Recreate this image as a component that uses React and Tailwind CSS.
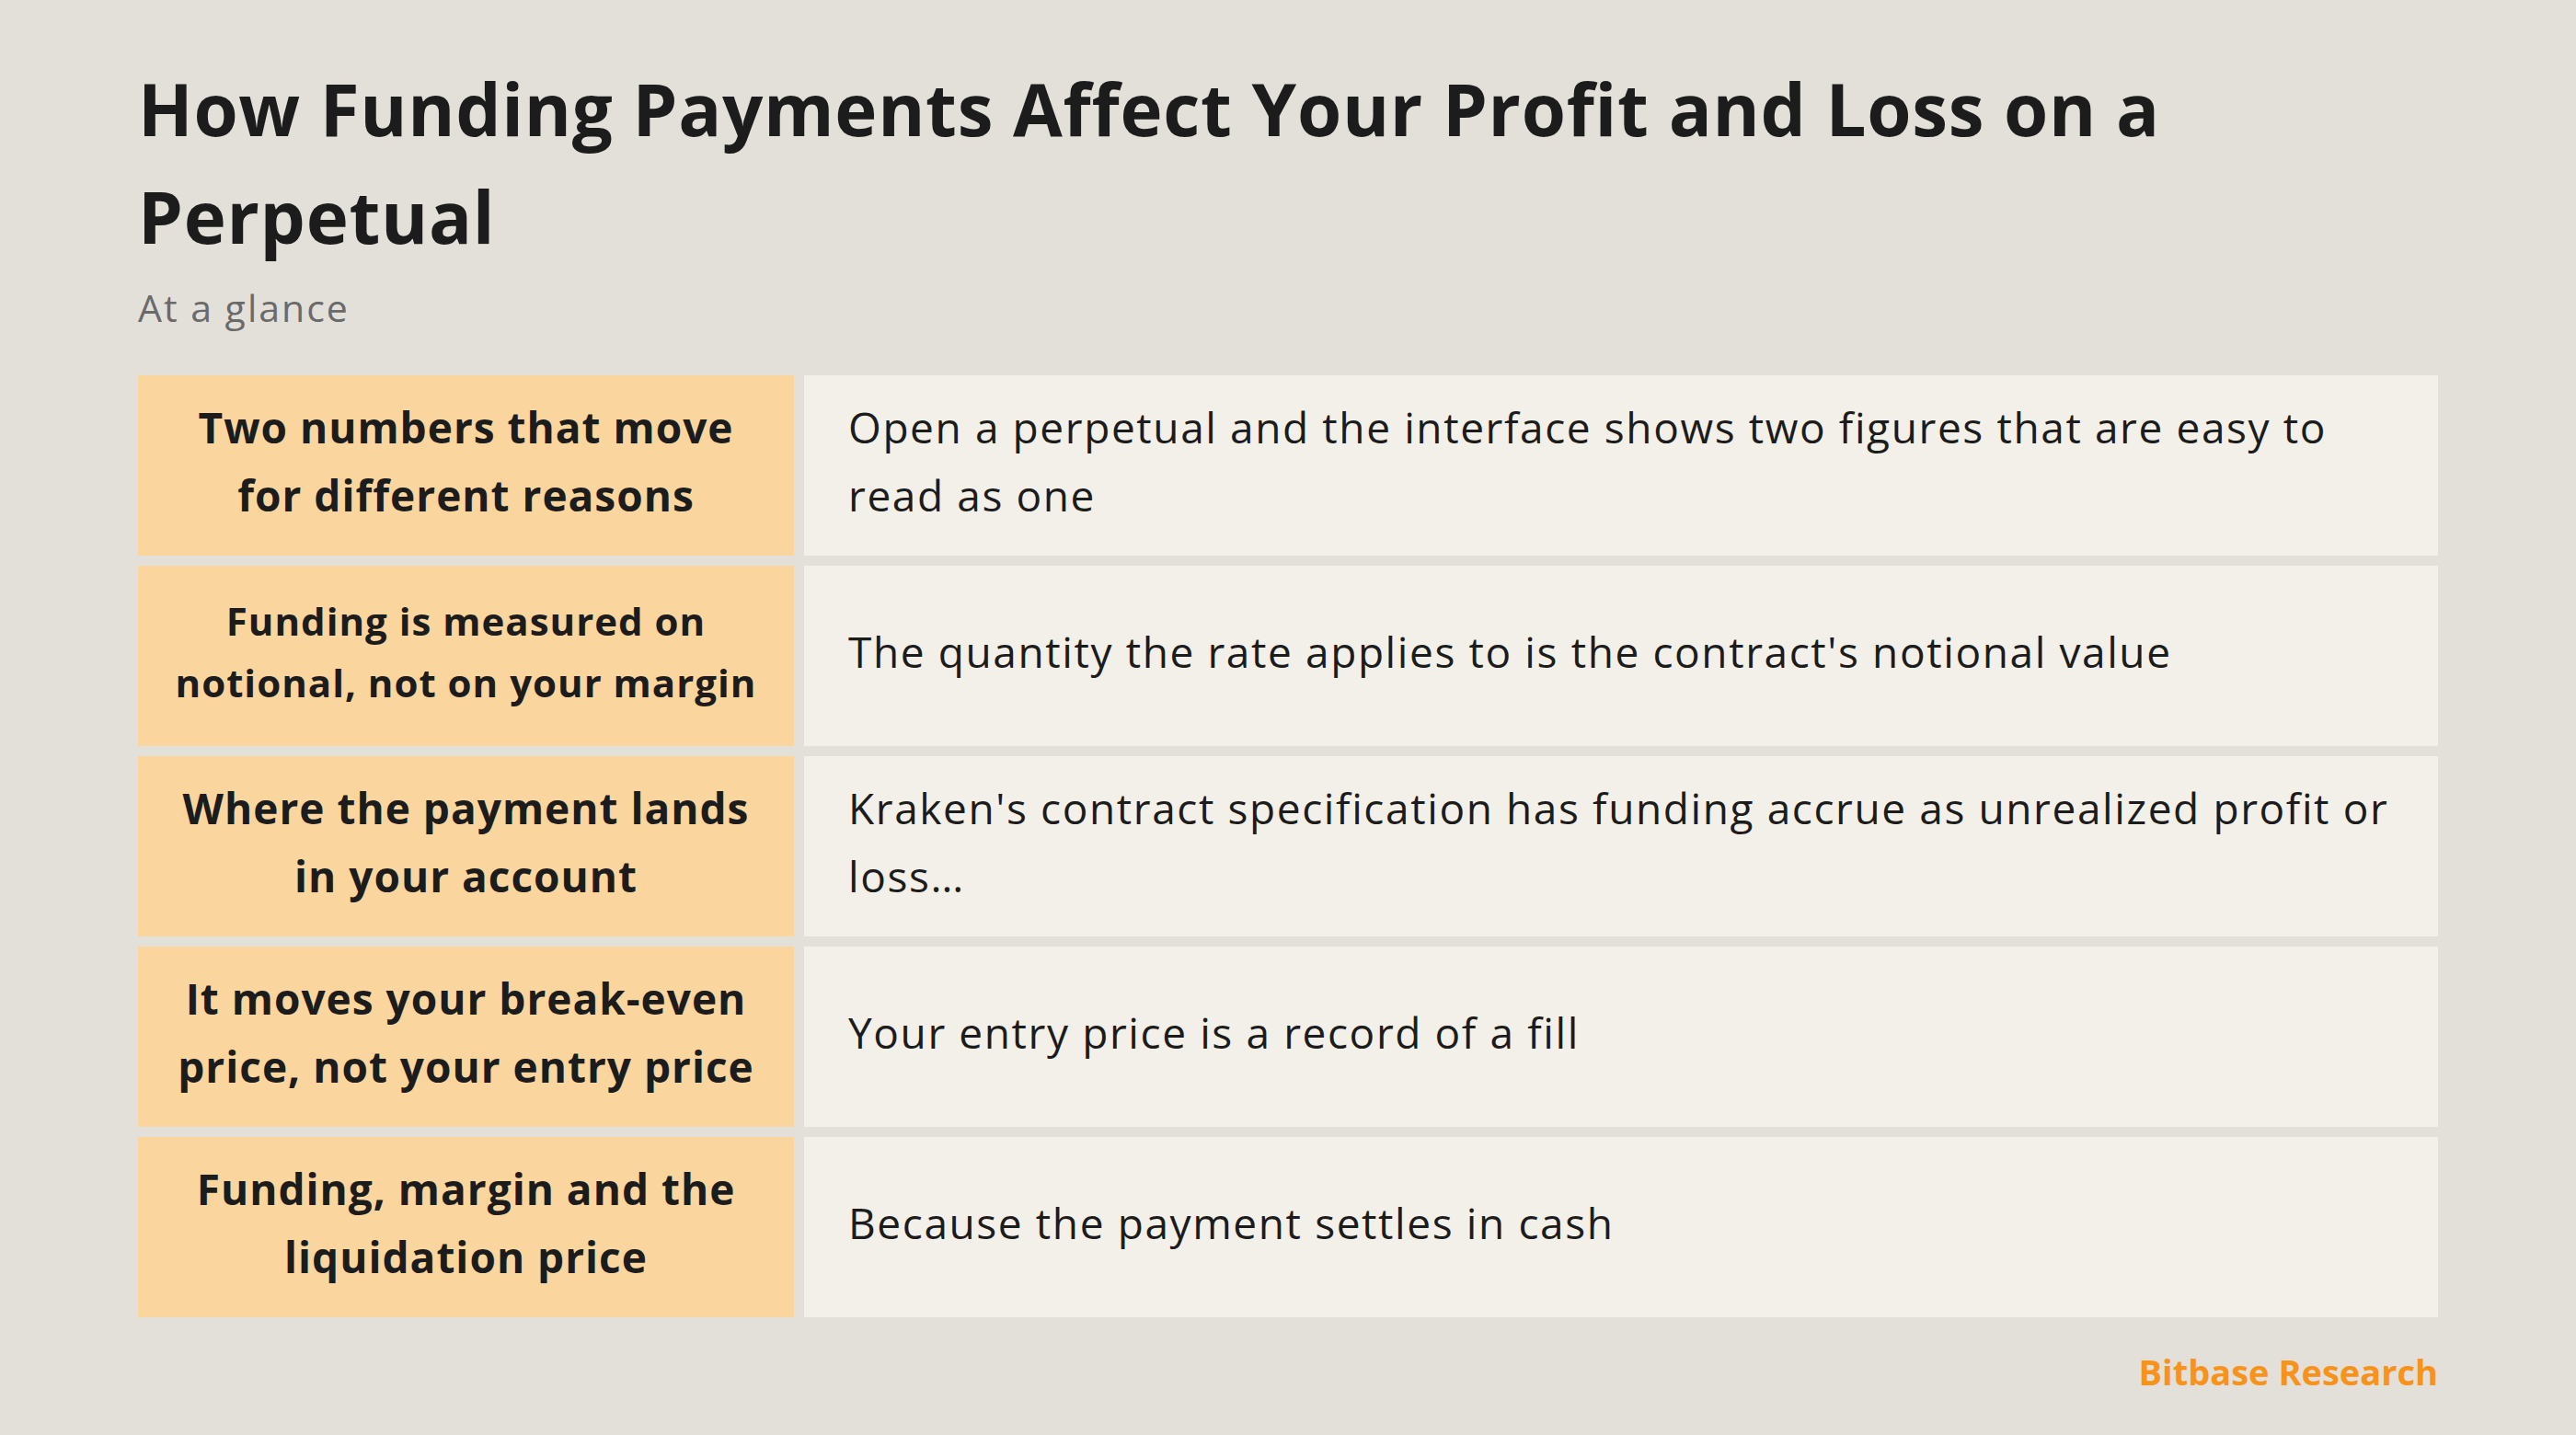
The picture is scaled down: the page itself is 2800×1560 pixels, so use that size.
const rows = [
  {
    label: ['Two numbers that move', 'for different reasons'],
    text: [
      'Open a perpetual and the interface shows two figures that are easy to',
      'read as one',
    ],
  },
  {
    label: ['Funding is measured on', 'notional, not on your margin'],
    small: true,
    text: ["The quantity the rate applies to is the contract's notional value"],
  },
  {
    label: ['Where the payment lands', 'in your account'],
    text: [
      "Kraken's contract specification has funding accrue as unrealized profit or",
      'loss…',
    ],
  },
  {
    label: ['It moves your break-even', 'price, not your entry price'],
    text: ['Your entry price is a record of a fill'],
  },
  {
    label: ['Funding, margin and the', 'liquidation price'],
    text: ['Because the payment settles in cash'],
  },
]

export default function App() {
  return (
    <div className="min-h-screen bg-[#E3DFD9] px-[150px] pt-[60px] pb-10 font-['Open_Sans',sans-serif] text-[#1c1c1c]">
      {/* Heading */}
      <h1 className="text-[78px] leading-[117px] font-bold tracking-[0.7px]">
        How Funding Payments Affect Your Profit and Loss on a
        <br />
        Perpetual
      </h1>
      <p className="mt-[10px] text-[41px] leading-[60px] tracking-[2px] text-[#6a6a6a]">
        At a glance
      </p>

      {/* Table */}
      <div className="mt-[44px] grid grid-cols-[713px_1fr] gap-[11px]">
        {rows.map((row, i) => (
          <div key={i} className="contents">
            <div className="flex h-[196px] items-center justify-center bg-[#FAD59E] px-[40px] pb-[10px] text-center font-bold tracking-[1px]">
              <p
                className={
                  row.small
                    ? 'whitespace-nowrap text-[42px] leading-[67px]'
                    : 'whitespace-nowrap text-[46px] leading-[74px]'
                }
              >
                {row.label[0]}
                <br />
                {row.label[1]}
              </p>
            </div>
            <div className="flex h-[196px] items-center bg-[#F3F0E9] px-[48px] pb-[10px]">
              <p className="whitespace-nowrap text-[46px] leading-[74px] tracking-[1.6px]">
                {row.text.map((line, j) => (
                  <span key={j}>
                    {j > 0 && <br />}
                    {line}
                  </span>
                ))}
              </p>
            </div>
          </div>
        ))}
      </div>

      {/* Footer */}
      <p className="mt-[31px] text-right text-[38px] leading-[57px] font-bold text-[#F7931A]">
        Bitbase Research
      </p>
    </div>
  )
}
